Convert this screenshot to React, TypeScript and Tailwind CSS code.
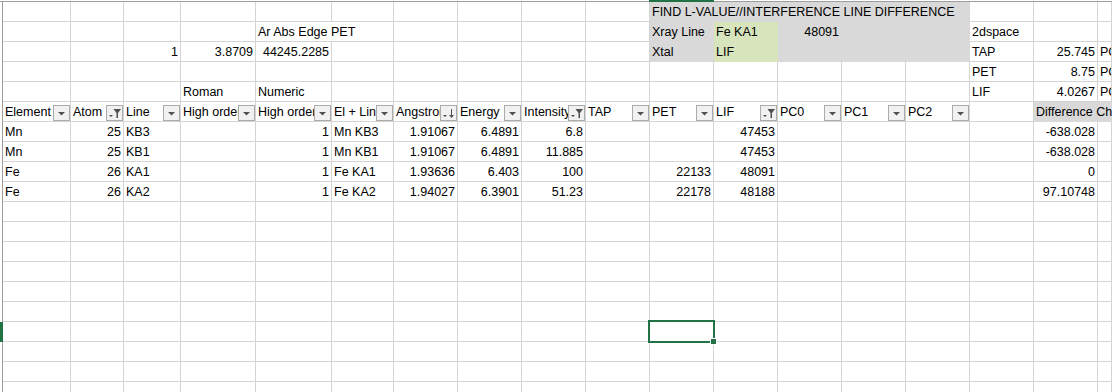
import React from 'react';

type Fill = 'gray' | 'green';
type Btn = 'down' | 'filter' | 'sort';
type Cell = { t?: string; r?: boolean; fill?: Fill; btn?: Btn; over?: boolean; noR?: boolean };

// column widths incl. right grid line (A..Q), R takes the rest
const COLS = [68, 53, 57, 75, 76, 62, 64, 64, 64, 64, 64, 64, 64, 64, 64, 64, 64];
const LETTERS = 'ABCDEFGHIJKLMNOPQR';

const col = (l: string) => LETTERS.indexOf(l);

const rows: Record<number, Cell>[] = [];
const set = (r: number, l: string, c: Cell) => {
  if (!rows[r]) rows[r] = {};
  rows[r][col(l)] = c;
};

// FIND block
set(1, 'K', { t: 'FIND L-VALUE//INTERFERENCE LINE DIFFERENCE', fill: 'gray', over: true });
['L', 'M', 'N', 'O'].forEach((l) => set(1, l, { fill: 'gray' }));
set(2, 'E', { t: 'Ar Abs Edge PET', over: true, noR: true });
set(2, 'K', { t: 'Xray Line', fill: 'gray' });
set(2, 'L', { t: 'Fe KA1', fill: 'green' });
set(2, 'M', { t: '48091', r: true, fill: 'gray' });
set(2, 'N', { fill: 'gray' });
set(2, 'O', { fill: 'gray' });
set(2, 'P', { t: '2dspace' });
set(3, 'C', { t: '1', r: true });
set(3, 'D', { t: '3.8709', r: true });
set(3, 'E', { t: '44245.2285', r: true });
set(3, 'K', { t: 'Xtal', fill: 'gray' });
set(3, 'L', { t: 'LIF', fill: 'green' });
['M', 'N', 'O'].forEach((l) => set(3, l, { fill: 'gray' }));
set(3, 'P', { t: 'TAP' });
set(3, 'Q', { t: '25.745', r: true });
set(3, 'R', { t: 'PC' });
set(4, 'P', { t: 'PET' });
set(4, 'Q', { t: '8.75', r: true });
set(4, 'R', { t: 'PC' });
set(5, 'D', { t: 'Roman' });
set(5, 'E', { t: 'Numeric' });
set(5, 'P', { t: 'LIF' });
set(5, 'Q', { t: '4.0267', r: true });
set(5, 'R', { t: 'PC' });

// header row
const headers: [string, string, Btn][] = [
  ['A', 'Element', 'down'],
  ['B', 'Atom', 'filter'],
  ['C', 'Line', 'down'],
  ['D', 'High order', 'down'],
  ['E', 'High order', 'down'],
  ['F', 'El + Line', 'down'],
  ['G', 'Angstrom', 'sort'],
  ['H', 'Energy', 'down'],
  ['I', 'Intensity', 'filter'],
  ['J', 'TAP', 'down'],
  ['K', 'PET', 'down'],
  ['L', 'LIF', 'filter'],
  ['M', 'PC0', 'down'],
  ['N', 'PC1', 'down'],
  ['O', 'PC2', 'down'],
];
headers.forEach(([l, t, b]) => set(6, l, { t, btn: b }));
set(6, 'P', {});
set(6, 'Q', { t: 'Difference Ch', fill: 'gray', over: true, noR: true });
set(6, 'R', { fill: 'gray' });

const data = [
  ['Mn', '25', 'KB3', '1', 'Mn KB3', '1.91067', '6.4891', '6.8', '', '47453', '-638.028'],
  ['Mn', '25', 'KB1', '1', 'Mn KB1', '1.91067', '6.4891', '11.885', '', '47453', '-638.028'],
  ['Fe', '26', 'KA1', '1', 'Fe KA1', '1.93636', '6.403', '100', '22133', '48091', '0'],
  ['Fe', '26', 'KA2', '1', 'Fe KA2', '1.94027', '6.3901', '51.23', '22178', '48188', '97.10748'],
];
data.forEach((d, i) => {
  const r = 7 + i;
  set(r, 'A', { t: d[0] });
  set(r, 'B', { t: d[1], r: true });
  set(r, 'C', { t: d[2] });
  set(r, 'E', { t: d[3], r: true });
  set(r, 'F', { t: d[4] });
  set(r, 'G', { t: d[5], r: true });
  set(r, 'H', { t: d[6], r: true });
  set(r, 'I', { t: d[7], r: true });
  if (d[8]) set(r, 'K', { t: d[8], r: true });
  set(r, 'L', { t: d[9], r: true });
  set(r, 'Q', { t: d[10], r: true });
});

const SEL_ROW = 17;
const SEL_COL = col('K');

const FilterBtn = ({ kind }: { kind: Btn }) => (
  <div className="absolute right-0 bottom-0 z-20 flex h-4 w-[17px] items-center justify-center border border-[#ababab] bg-[#f1f1f1]">
    {kind === 'down' && (
      <svg width="15" height="14" viewBox="0 0 15 14">
        <polygon points="4,6 11,6 7.5,9.5" fill="#505050" />
      </svg>
    )}
    {kind === 'filter' && (
      <svg width="15" height="14" viewBox="0 0 15 14">
        <polygon points="2,9 6,9 4,11" fill="#505050" />
        <polygon points="6.5,3 14,3 11,7 11,12 9.5,12 9.5,7" fill="#505050" />
      </svg>
    )}
    {kind === 'sort' && (
      <svg width="15" height="14" viewBox="0 0 15 14">
        <polygon points="2,9 6,9 4,11" fill="#505050" />
        <rect x="10" y="3" width="1" height="8" fill="#505050" />
        <polygon points="8,9 13,9 10.5,12" fill="#505050" />
      </svg>
    )}
  </div>
);

const CellView = ({ c, w, rIdx, cIdx }: { c?: Cell; w?: number; rIdx: number; cIdx: number }) => {
  const fill = c?.fill === 'gray' ? 'bg-[#d9d9d9] border-[#d9d9d9]' : c?.fill === 'green' ? 'bg-[#d8e4bc] border-[#d8e4bc]' : 'border-[#d4d4d4]';
  const sel = rIdx === SEL_ROW && cIdx === SEL_COL;
  return (
    <div
      className={`relative flex h-5 shrink-0 items-end border-b pb-[1px] ${c?.noR ? '' : 'border-r'} ${fill} ${c?.r ? 'justify-end pr-[2px]' : 'pl-[2px]'} ${c?.over ? 'z-10' : c?.btn ? 'overflow-hidden' : ''} ${w ? '' : 'flex-1 overflow-hidden'}`}
      style={w ? { width: w } : undefined}
    >
      {c?.t && <span className="relative z-10 whitespace-nowrap leading-4">{c.t}</span>}
      {c?.btn && <FilterBtn kind={c.btn} />}
      {sel && (
        <>
          <div className="absolute left-[-2px] top-[-2px] z-30 h-[23px] w-[67px] border-2 border-[#217346]" />
          <div className="absolute left-[60px] top-[16px] z-40 h-[7px] w-[7px] border border-white bg-[#217346]" />
        </>
      )}
    </div>
  );
};

export default function App() {
  const rowNums = Array.from({ length: 20 }, (_, i) => i + 1);
  return (
    <div
      className="h-[392px] w-[1112px] overflow-hidden bg-white text-[12.5px] text-black"
      style={{ fontFamily: '"Liberation Sans", Arial, sans-serif' }}
    >
      {/* top frame line; green over the selected column */}
      <div className="flex h-[2px]">
        <div className="w-[649px] shrink-0 border-b border-[#9e9e9e]" />
        <div className="w-[65px] shrink-0 bg-[#217346]" />
        <div className="flex-1 border-b border-[#9e9e9e]" />
      </div>
      {rowNums.map((r) => (
        <div key={r} className="flex">
          <div className={`h-5 w-[3px] shrink-0 ${r === SEL_ROW ? 'bg-[#217346]' : 'border-r border-[#9e9e9e]'}`} />
          {COLS.map((w, i) => (
            <CellView key={i} c={rows[r]?.[i]} w={w} rIdx={r} cIdx={i} />
          ))}
          <CellView c={rows[r]?.[17]} rIdx={r} cIdx={17} />
        </div>
      ))}
    </div>
  );
}
